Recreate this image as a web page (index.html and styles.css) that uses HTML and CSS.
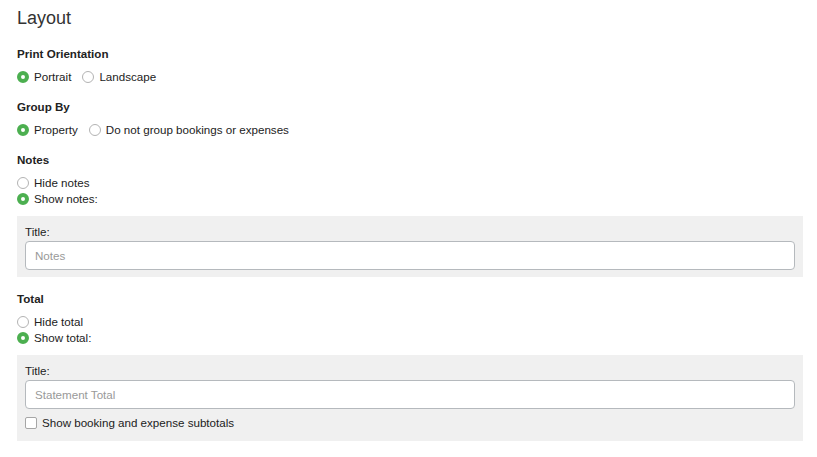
FILE: index.html
```html
<!DOCTYPE html>
<html>
<head>
<meta charset="utf-8">
<link rel="stylesheet" href="styles.css">
</head>
<body>
<div class="page">
  <h1 class="title">Layout</h1>

  <section class="section">
    <div class="label">Print Orientation</div>
    <div class="options inline">
      <label class="opt"><input type="radio" name="orient" checked><span>Portrait</span></label>
      <label class="opt"><input type="radio" name="orient"><span>Landscape</span></label>
    </div>
  </section>

  <section class="section">
    <div class="label">Group By</div>
    <div class="options inline">
      <label class="opt"><input type="radio" name="group" checked><span>Property</span></label>
      <label class="opt"><input type="radio" name="group"><span>Do not group bookings or expenses</span></label>
    </div>
  </section>

  <section class="section">
    <div class="label">Notes</div>
    <div class="options stacked">
      <label class="opt"><input type="radio" name="notes"><span>Hide notes</span></label>
      <label class="opt"><input type="radio" name="notes" checked><span>Show notes:</span></label>
    </div>
    <div class="panel">
      <div class="field-label">Title:</div>
      <input class="text-input" type="text" placeholder="Notes">
    </div>
  </section>

  <section class="section">
    <div class="label">Total</div>
    <div class="options stacked">
      <label class="opt"><input type="radio" name="total"><span>Hide total</span></label>
      <label class="opt"><input type="radio" name="total" checked><span>Show total:</span></label>
    </div>
    <div class="panel panel-total">
      <div class="field-label">Title:</div>
      <input class="text-input" type="text" placeholder="Statement Total">
      <label class="check"><input type="checkbox"><span>Show booking and expense subtotals</span></label>
    </div>
  </section>
</div>
</body>
</html>
```

FILE: styles.css
```css
html, body {
  margin: 0;
  padding: 0;
  background: #ffffff;
}

body {
  font-family: "Liberation Sans", Arial, sans-serif;
  font-size: 11.6px;
  color: #222222;
}

.page {
  padding: 8px 14px 0 17px;
}

.title {
  margin: 0 0 18px 0;
  font-size: 18px;
  line-height: 20px;
  font-weight: normal;
  color: #333333;
}

.section {
  margin-bottom: 14px;
}

.label {
  font-weight: bold;
  line-height: 16px;
  margin-bottom: 7px;
}

.options.inline {
  display: flex;
  gap: 11px;
}

.options.stacked {
  display: flex;
  flex-direction: column;
}

.opt {
  display: flex;
  align-items: center;
  line-height: 16px;
  height: 16px;
}

.opt input {
  appearance: none;
  -webkit-appearance: none;
  width: 12px;
  height: 12px;
  margin: 0 5px 0 0;
  border: 1px solid #b3b3b3;
  border-radius: 50%;
  background: #ffffff;
  box-sizing: border-box;
}

.opt input:checked {
  border: 4px solid #4caf50;
}

.panel {
  margin-top: 9px;
  background: #f0f0f0;
  padding: 8px 8px 7px 8px;
}

.panel-total {
  padding-bottom: 10px;
}

.field-label {
  line-height: 16px;
  margin-bottom: 1px;
}

.text-input {
  display: block;
  box-sizing: border-box;
  width: 100%;
  height: 29px;
  margin: 0;
  padding: 0 9px;
  border: 1px solid #b5b9bd;
  border-radius: 4px;
  background: #ffffff;
  font-family: "Liberation Sans", Arial, sans-serif;
  font-size: 11.6px;
  color: #222222;
}

.text-input::placeholder {
  color: #999999;
}

.check {
  display: flex;
  align-items: center;
  margin-top: 6px;
  line-height: 16px;
  height: 16px;
}

.check input {
  appearance: none;
  -webkit-appearance: none;
  width: 12px;
  height: 12px;
  margin: 0 5px 0 0;
  border: 1px solid #a6a6a6;
  border-radius: 2px;
  background: #ffffff;
  box-sizing: border-box;
}
```
